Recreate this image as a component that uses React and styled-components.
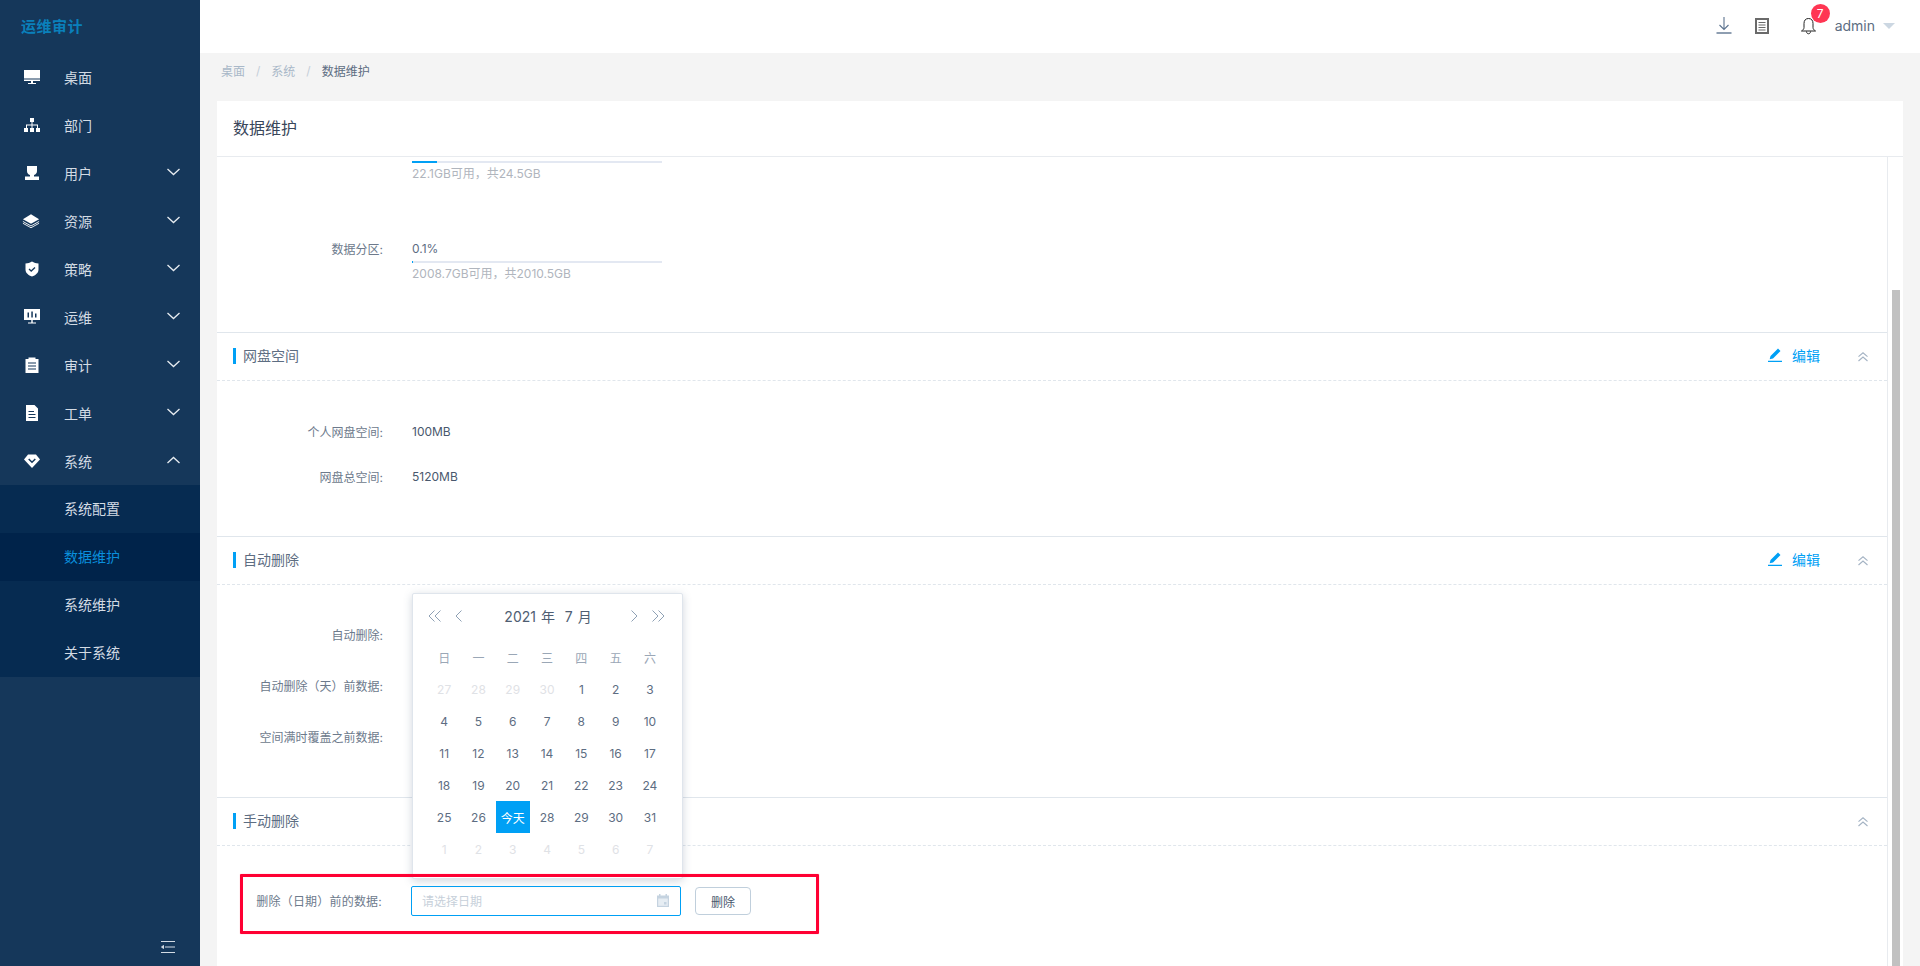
import React from "react";
import styled, { createGlobalStyle } from "styled-components";

const Global = createGlobalStyle`
  * { box-sizing: border-box; }
  html, body { margin: 0; height: 100%; }
  body {
    background: #f4f4f4;
    color: #5d6d82;
    font-family: Inter, "Noto Sans CJK SC", sans-serif;
    font-size: 12px;
    overflow: hidden;
  }
`;

const Shell = styled.div`
  display: flex;
  height: 966px;
  overflow: hidden;
`;

const Side = styled.aside`
  position: relative;
  width: 200px;
  flex: none;
  background: #15375a;
`;
const Logo = styled.div`
  height: 53px;
  padding: 0 0 2px 21px;
  display: flex;
  align-items: center;
  color: #0a80bb;
  font-size: 15px;
  font-weight: 700;
  letter-spacing: 0.5px;
`;
const MenuRow = styled.div`
  height: 48px;
  display: flex;
  align-items: center;
  padding: 0 20px 0 24px;
  color: #d3dbe4;
  font-size: 14px;
`;
const MenuIcon = styled.span`
  width: 16px;
  height: 16px;
  margin-right: 24px;
  display: flex;
  svg { display: block; }
`;
const MenuText = styled.span`
  flex: 1;
`;
const MenuChevron = styled.span`
  display: flex;
  margin-bottom: 3px;
`;
const SubMenu = styled.div`
  background: #062b51;
`;
const SubRow = styled.div`
  height: 48px;
  display: flex;
  align-items: center;
  padding: 0 0 3px 64px;
  font-size: 14px;
  color: ${(p) => (p.$active ? "#0a8fdc" : "#d3dbe4")};
  background: ${(p) => (p.$active ? "#00234a" : "transparent")};
`;
const Collapse = styled.div`
  position: absolute;
  left: 161px;
  bottom: 13px;
  display: flex;
`;

const Main = styled.main`
  flex: 1;
  min-width: 0;
  display: flex;
  flex-direction: column;
`;
const Top = styled.header`
  height: 53px;
  flex: none;
  background: #fff;
  display: flex;
  align-items: center;
  justify-content: flex-end;
  padding: 0 25px 2px 0;
`;
const TopIcon = styled.span`
  position: relative;
  display: flex;
  margin-left: ${(p) => p.$gap}px;
`;
const Badge = styled.span`
  position: absolute;
  left: 10px;
  top: -13px;
  width: 19px;
  height: 19px;
  border-radius: 50%;
  background: #ff3653;
  color: #fff;
  font-size: 12px;
  display: flex;
  align-items: center;
  justify-content: center;
`;
const UserName = styled.span`
  margin-left: 19px;
  font-size: 14px;
  color: #5d6d82;
`;
const Caret = styled.span`
  margin-left: 8px;
  width: 0;
  height: 0;
  border-left: 6px solid transparent;
  border-right: 6px solid transparent;
  border-top: 6px solid #ccd7e2;
`;

const Crumbs = styled.nav`
  height: 48px;
  flex: none;
  display: flex;
  align-items: center;
  padding: 0 0 14px 21px;
  color: #a9b8c8;
`;
const CrumbSep = styled.span`
  margin: 0 11px;
  color: #c4ced8;
`;
const CrumbNow = styled.span`
  color: #5d6d82;
`;

const Card = styled.div`
  flex: 1;
  min-height: 0;
  margin: 0 17px;
  background: #fff;
  display: flex;
  flex-direction: column;
`;
const CardTitle = styled.div`
  height: 56px;
  flex: none;
  border-bottom: 1px solid #e8ebef;
  padding: 0 16px 4px;
  display: flex;
  align-items: center;
  font-size: 16px;
  color: #39465a;
`;
const Scroller = styled.div`
  position: relative;
  flex: 1;
  min-height: 0;
  overflow: hidden;
`;
const Content = styled.div`
  width: 1671px;
  height: 100%;
  border-right: 1px solid #e8ebef;
`;
const Thumb = styled.div`
  position: absolute;
  top: 133px;
  bottom: 0;
  left: 1675px;
  width: 8px;
  background: #c1c1c1;
`;

const Storage = styled.div`
  height: 175px;
  padding: 4px 0 0 195px;
`;
const StorageRow = styled.div`
  display: flex;
  margin: 0 0 ${(p) => p.$after || 0}px ${(p) => (p.$labelled ? -195 : 0)}px;
`;
const Label = styled.div`
  width: 195px;
  flex: none;
  padding-right: 29px;
  text-align: right;
  color: #6d7a8c;
  white-space: nowrap;
  &::after {
    content: ":";
  }
`;
const FormLabel = styled(Label)`
  padding: 0 30px 2px 0;
  letter-spacing: 0.2px;
`;
const Usage = styled.div`
  width: 250px;
`;
const Percent = styled.div`
  height: 17px;
  line-height: 17px;
  margin-bottom: 4px;
`;
const Track = styled.div`
  height: 2px;
  background: #e3e8f2;
`;
const Fill = styled.div`
  height: 100%;
  background: #00a0f5;
`;
const Free = styled.div`
  margin-top: 2px;
  line-height: 17px;
  color: #b0b5bd;
`;

const Section = styled.section`
  border-top: 1px solid #e0e6ec;
  height: ${(p) => p.$height}px;
`;
const SectionHead = styled.div`
  height: 48px;
  border-bottom: 1px dashed #e0e6ec;
  padding: 0 19px 2px 0;
  display: flex;
  align-items: center;
`;
const SectionName = styled.div`
  flex: 1;
  margin-left: 16px;
  padding-left: 7px;
  border-left: 3px solid #00a0f5;
  height: 16px;
  line-height: 16px;
  font-size: 14px;
  color: #5d6d82;
`;
const EditLink = styled.span`
  display: flex;
  align-items: center;
  gap: 10px;
  margin: 0 38px 1px 0;
  font-size: 14px;
  color: #00a0f5;
`;
const Fold = styled.span`
  display: flex;
  margin-top: 2px;
`;
const Rows = styled.div`
  padding-top: ${(p) => p.$top}px;
`;
const Row = styled.div`
  height: ${(p) => p.$height}px;
  display: flex;
  align-items: center;
`;
const Value = styled.div`
  color: #49586d;
`;

const ManualBody = styled.div`
  position: relative;
  padding-top: 40px;
`;
const Picker = styled.div`
  position: relative;
  width: 270px;
  height: 30px;
  margin-left: -1px;
  border: 1px solid #00a0f5;
  border-radius: 2px;
  display: flex;
  align-items: center;
  justify-content: space-between;
  padding: 0 11px 1px 10px;
  color: #c7d0da;
`;
const DeleteBtn = styled.button`
  margin-left: 14px;
  width: 56px;
  height: 28px;
  border: 1px solid #c0cfdc;
  border-radius: 4px;
  background: #fff;
  color: #49586d;
  font: inherit;
`;
const Outline = styled.div`
  position: absolute;
  left: 23px;
  top: 28px;
  width: 579px;
  height: 60px;
  border: 3px solid #ff0033;
  border-radius: 1px;
  box-shadow: 0 0 1px rgba(255, 0, 51, 0.5);
  z-index: 3;
  pointer-events: none;
`;

const Popup = styled.div`
  position: absolute;
  left: 0;
  bottom: 36px;
  width: 271px;
  height: 286px;
  background: #fff;
  border: 1px solid #dfe5ec;
  border-radius: 2px;
  box-shadow: 0 2px 8px rgba(70, 95, 125, 0.25);
  padding: 0 14px;
  z-index: 2;
`;
const CalHead = styled.div`
  height: 44px;
  padding: 0 3px 0 1px;
  display: flex;
  align-items: center;
  color: #8fa1b5;
`;
const CalMonth = styled.div`
  flex: 1;
  text-align: center;
  font-size: 14px;
  color: #4f5e72;
  padding-left: 3px;
  word-spacing: 1px;
`;
const Nav = styled.span`
  display: flex;
  margin-left: ${(p) => p.$l || 0}px;
`;
const CalGrid = styled.div`
  margin-top: 3px;
  display: grid;
  grid-template-columns: repeat(7, 34.300px);
  grid-auto-rows: 32px;
`;
const Cell = styled.div`
  display: flex;
  align-items: center;
  justify-content: center;
  color: ${(p) =>
    p.$today ? "#fff" : p.$muted ? "#dfe2e6" : p.$week ? "#9aa7b6" : "#5d6d82"};
  background: ${(p) => (p.$today ? "#00a0f5" : "transparent")};
`;

const Desktop = (
  <svg width="16" height="16" viewBox="0 0 16 16" fill="#fff">
    <path d="M0 1h16v8.500H0zM0 10.500h16V12H0zM7 12h2v2H7zM4 14h8v1H4z" />
  </svg>
);
const Org = (
  <svg width="16" height="16" viewBox="0 0 16 16" fill="#fff">
    <path d="M6 1h4v4H6zM0 11h4v4H0zM6 11h4v4H6zM12 11h4v4h-4zM7.500 5h1v2.500H14V11h-1V8.500H8.500V11h-1V8.500H3V11H2V7.500h5.500z" />
  </svg>
);
const User = (
  <svg width="16" height="16" viewBox="0 0 16 16" fill="#fff">
    <path d="M3 1h10v5c0 2-1.200 3.400-3 4v1.500h5V15H1v-3.500h5V10C4.200 9.400 3 8 3 6z" />
  </svg>
);
const Layers = (
  <svg width="20" height="16" viewBox="0 0 20 16" fill="none" style={{ marginLeft: -2 }}>
    <path d="M10 0.500 19 6l-9 5-9-5z" fill="#fff" />
    <path d="M1 8.500l9 5 9-5M1 10.500l9 5 9-5" stroke="#fff" strokeWidth="1" />
  </svg>
);
const Shield = (
  <svg width="16" height="16" viewBox="0 0 16 16">
    <path d="M8 0.500c2 1.300 4 1.800 6.500 2v6c0 3.500-3 5.800-6.500 7-3.500-1.200-6.500-3.500-6.500-7v-6C4 2.300 6 1.800 8 0.500z" fill="#fff" />
    <path d="M5 8l2.200 2L11 6.500" stroke="#15375a" strokeWidth="1.300" fill="none" />
  </svg>
);
const Screen = (
  <svg width="16" height="16" viewBox="0 0 16 16" fill="#fff">
    <path fillRule="evenodd" d="M0 0h16v11H0zM3.500 3.500v5h1.500v-5zM7.300 2.500v6h1.500v-6zM11 4.500v4h1.500v-4z" />
    <path d="M7.300 11h1.400v2.500H7.300zM4 13.500h8v1H4z" />
  </svg>
);
const Clipboard = (
  <svg width="16" height="16" viewBox="0 0 16 16" fill="#fff">
    <path fillRule="evenodd" d="M1.500 2h3V0.500h7V2h3v14h-13zM4 5.500v1h8v-1zM4 8.500v1h8v-1zM4 11.500v1h8v-1z" />
  </svg>
);
const FileDoc = (
  <svg width="16" height="16" viewBox="0 0 16 16" fill="#fff">
    <path fillRule="evenodd" d="M2 0h8.500L14 3.500V16H2zM4.500 6v1H10V6zM4.500 9v1h7V9zM4.500 12v1h7v-1z" />
  </svg>
);
const Gem = (
  <svg width="16" height="16" viewBox="0 0 16 16">
    <path d="M4 1.500h8L16 6.500 8 15 0 6.500z" fill="#fff" />
    <path d="M4.700 6 8 9.300 11.300 6" stroke="#15375a" strokeWidth="1.500" fill="none" />
  </svg>
);

const Chevron = ({ up }) => (
  <MenuChevron>
    <svg width="13" height="8" viewBox="0 0 13 8" fill="none" stroke="#e6ebf0" strokeWidth="1.300">
      <path d={up ? "M0.500 7 6.500 1.500 12.500 7" : "M0.500 1 6.500 6.500 12.500 1"} />
    </svg>
  </MenuChevron>
);

const DoubleUp = () => (
  <Fold>
    <svg width="10" height="10" viewBox="0 0 10 10" fill="none" stroke="#a4b3c4" strokeWidth="1.100">
      <path d="M0.500 4.700 5 0.800 9.500 4.700M0.500 9 5 5.100 9.500 9" />
    </svg>
  </Fold>
);

const Pencil = () => (
  <svg width="14" height="14" viewBox="0 0 14 14" fill="#00a0f5">
    <path d="M10 0.500 12.500 3 5 10.500 1.700 11.300 2.500 8zM0 12.800h14V14H0z" />
  </svg>
);

const Left = ({ double }) => (
  <svg width={double ? 14 : 8} height="12" viewBox={double ? "0 0 14 12" : "0 0 8 12"} fill="none" stroke="#8fa1b5" strokeWidth="1">
    <path d="M6.500 0.500 1 6l5.500 5.500" />
    {double && <path d="M12.500 0.500 7 6l5.500 5.500" />}
  </svg>
);
const Right = ({ double }) => (
  <svg width={double ? 14 : 8} height="12" viewBox={double ? "0 0 14 12" : "0 0 8 12"} fill="none" stroke="#8fa1b5" strokeWidth="1">
    <path d="M1.500 0.500 7 6l-5.500 5.500" />
    {double && <path d="M7.500 0.500 13 6l-5.500 5.500" />}
  </svg>
);

const menu = [
  { name: "桌面", icon: Desktop },
  { name: "部门", icon: Org },
  { name: "用户", icon: User, more: true },
  { name: "资源", icon: Layers, more: true },
  { name: "策略", icon: Shield, more: true },
  { name: "运维", icon: Screen, more: true },
  { name: "审计", icon: Clipboard, more: true },
  { name: "工单", icon: FileDoc, more: true },
];

const subMenu = ["系统配置", "数据维护", "系统维护", "关于系统"];
const weekDays = ["日", "一", "二", "三", "四", "五", "六"];

const days = [
  [27, 1], [28, 1], [29, 1], [30, 1],
  ...Array.from({ length: 31 }, (_, i) => [i + 1, 0]),
  ...Array.from({ length: 7 }, (_, i) => [i + 1, 1]),
];

function SectionHeader({ name, editable }) {
  return (
    <SectionHead>
      <SectionName>{name}</SectionName>
      {editable && (
        <EditLink>
          <Pencil />
          编辑
        </EditLink>
      )}
      <DoubleUp />
    </SectionHead>
  );
}

export default function App() {
  return (
    <Shell>
      <Global />
      <Side>
        <Logo>运维审计</Logo>
        {menu.map((m) => (
          <MenuRow key={m.name}>
            <MenuIcon>{m.icon}</MenuIcon>
            <MenuText>{m.name}</MenuText>
            {m.more && <Chevron />}
          </MenuRow>
        ))}
        <MenuRow>
          <MenuIcon>{Gem}</MenuIcon>
          <MenuText>系统</MenuText>
          <Chevron up />
        </MenuRow>
        <SubMenu>
          {subMenu.map((s) => (
            <SubRow key={s} $active={s === "数据维护"}>
              {s}
            </SubRow>
          ))}
        </SubMenu>
        <Collapse>
          <svg width="14" height="12" viewBox="0 0 14 12" fill="none" stroke="#d3dbe4" strokeWidth="1">
            <path d="M0 0.500h14M4 6h10M0 11.500h14" />
            <path d="M0.500 6 2.500 4.500v3z" fill="#d3dbe4" />
          </svg>
        </Collapse>
      </Side>

      <Main>
        <Top>
          <TopIcon>
            <svg width="16" height="17" viewBox="0 0 16 17" fill="none" stroke="#5d7490" strokeWidth="1.100">
              <path d="M8 0v12M3.500 8 8 12.500 12.500 8" />
              <path d="M0.500 16h15" strokeWidth="1.400" />
            </svg>
          </TopIcon>
          <TopIcon $gap={23}>
            <svg width="14" height="16" viewBox="0 0 14 16" fill="none" stroke="#6a6a6a">
              <path d="M1 1h12v14H1z" strokeWidth="2" />
              <path d="M3.500 4.500h7M3.500 7h7M3.500 9.500h7M3.500 12h7" strokeWidth="1.200" />
            </svg>
          </TopIcon>
          <TopIcon $gap={32}>
            <svg width="15" height="18" viewBox="0 0 15 18" fill="none" stroke="#222" strokeWidth="1">
              <path d="M7.500 1.500c-3 0-4.500 2-4.500 5v4c0 1.500-1 2.500-2.500 3.500h14c-1.500-1-2.500-2-2.500-3.500v-4c0-3-1.500-5-4.500-5z" />
              <path d="M5.500 14.500c0 3 4 3 4 0" />
            </svg>
            <Badge>7</Badge>
          </TopIcon>
          <UserName>admin</UserName>
          <Caret />
        </Top>

        <Crumbs>
          桌面
          <CrumbSep>/</CrumbSep>
          系统
          <CrumbSep>/</CrumbSep>
          <CrumbNow>数据维护</CrumbNow>
        </Crumbs>

        <Card>
          <CardTitle>数据维护</CardTitle>
          <Scroller>
            <Content>
              <Storage>
                <StorageRow $after={58}>
                  <Usage>
                    <Track>
                      <Fill style={{ width: "9.800%" }} />
                    </Track>
                    <Free>{"22.1GB可用\uFF0C共24.5GB"}</Free>
                  </Usage>
                </StorageRow>
                <StorageRow $labelled>
                  <Label>数据分区</Label>
                  <Usage>
                    <Percent>0.1%</Percent>
                    <Track>
                      <Fill style={{ width: "0.500%" }} />
                    </Track>
                    <Free>{"2008.7GB可用\uFF0C共2010.5GB"}</Free>
                  </Usage>
                </StorageRow>
              </Storage>

              <Section $height={204}>
                <SectionHeader name="网盘空间" editable />
                <Rows $top={28}>
                  <Row $height={45}>
                    <Label>个人网盘空间</Label>
                    <Value>100MB</Value>
                  </Row>
                  <Row $height={45}>
                    <Label>网盘总空间</Label>
                    <Value>5120MB</Value>
                  </Row>
                </Rows>
              </Section>

              <Section $height={261}>
                <SectionHeader name="自动删除" editable />
                <Rows $top={24}>
                  <Row $height={51}>
                    <Label>自动删除</Label>
                  </Row>
                  <Row $height={51}>
                    <Label>{"自动删除\uFF08天\uFF09前数据"}</Label>
                  </Row>
                  <Row $height={51}>
                    <Label>空间满时覆盖之前数据</Label>
                  </Row>
                </Rows>
              </Section>

              <Section>
                <SectionHeader name="手动删除" />
                <ManualBody>
                  <Row $height={30}>
                    <FormLabel>{"删除\uFF08日期\uFF09前的数据"}</FormLabel>
                    <Picker>
                      请选择日期
                      <svg width="12" height="13" viewBox="0 0 12 13">
                        <path d="M0 1.500h2V0h1.500v1.500h5V0H10v1.500h2V13H0z" fill="#c5d3e0" />
                        <path d="M1.200 4.500h9.600v7.300H1.200z" fill="#e6edf3" />
                        <path d="M7 8h2.500v2.500H7z" fill="#c5d3e0" />
                      </svg>
                      <Popup>
                        <CalHead>
                          <Nav><Left double /></Nav>
                          <Nav $l={13}><Left /></Nav>
                          <CalMonth>2021 年&nbsp; 7 月</CalMonth>
                          <Nav><Right /></Nav>
                          <Nav $l={13}><Right double /></Nav>
                        </CalHead>
                        <CalGrid>
                          {weekDays.map((d) => (
                            <Cell key={d} $week>{d}</Cell>
                          ))}
                          {days.map(([d, muted], i) => (
                            <Cell key={i} $muted={muted} $today={d === 27 && !muted}>
                              {d === 27 && !muted ? "今天" : d}
                            </Cell>
                          ))}
                        </CalGrid>
                      </Popup>
                    </Picker>
                    <DeleteBtn>删除</DeleteBtn>
                  </Row>
                  <Outline />
                </ManualBody>
              </Section>
            </Content>
            <Thumb />
          </Scroller>
        </Card>
      </Main>
    </Shell>
  );
}
